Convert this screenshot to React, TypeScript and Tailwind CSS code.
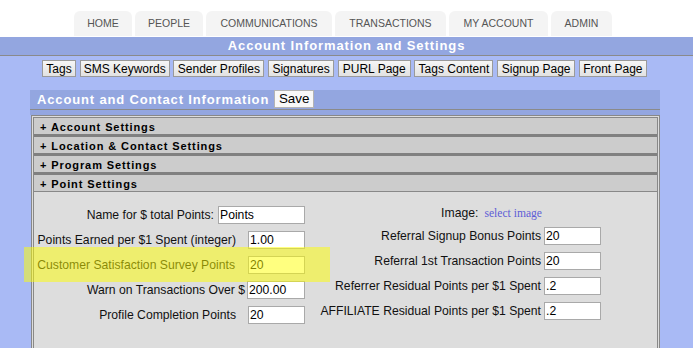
import React from 'react';

const tabs = [
  { label: 'HOME', w: 'w-[58px]' },
  { label: 'PEOPLE', w: 'w-[68px]' },
  { label: 'COMMUNICATIONS', w: 'w-[126px]' },
  { label: 'TRANSACTIONS', w: 'w-[111px]' },
  { label: 'MY ACCOUNT', w: 'w-[99px]' },
  { label: 'ADMIN', w: 'w-[61px]' },
];

const navButtons = [
  { label: 'Tags', w: 'w-[34px]' },
  { label: 'SMS Keywords', w: 'w-[90px]' },
  { label: 'Sender Profiles', w: 'w-[91px]' },
  { label: 'Signatures', w: 'w-[66px]' },
  { label: 'PURL Page', w: 'w-[73px]' },
  { label: 'Tags Content', w: 'w-[79px]' },
  { label: 'Signup Page', w: 'w-[78px]' },
  { label: 'Front Page', w: 'w-[68px]' },
];

const sections = ['Account Settings', 'Location & Contact Settings', 'Program Settings', 'Point Settings'];

const leftRows = [
  { label: 'Name for $ total Points:', value: 'Points', gap: 'ml-[4px]', width: 'w-[87px]' },
  { label: 'Points Earned per $1 Spent (integer)', value: '1.00', gap: 'ml-[12px]', width: 'w-[57px]' },
  { label: 'Customer Satisfaction Survey Points', value: '20', gap: 'ml-[13px]', width: 'w-[57px]' },
  { label: 'Warn on Transactions Over $', value: '200.00', gap: 'ml-[2px]', width: 'w-[58px]' },
  { label: 'Profile Completion Points', value: '20', gap: 'ml-[12px]', width: 'w-[57px]' },
];

const rightRows = [
  { label: 'Referral Signup Bonus Points', value: '20' },
  { label: 'Referral 1st Transaction Points', value: '20' },
  { label: 'Referrer Residual Points per $1 Spent', value: '.2' },
  { label: 'AFFILIATE Residual Points per $1 Spent', value: '.2' },
];

const Field = ({ value, className = '' }: { value: string; className?: string }) => (
  <div className={`h-[18px] bg-white border border-[#a9a9a9] pl-[1px] flex items-center text-[12.2px] text-black ${className}`}>
    {value}
  </div>
);

export default function App() {
  return (
    <div className="relative w-[693px] h-[348px] overflow-hidden bg-white font-['Liberation_Sans',Arial,sans-serif]">
      {/* top tabs */}
      <div className="flex gap-[3px] pl-[74px] pt-[11px] mb-px">
        {tabs.map((t) => (
          <div key={t.label} className={`${t.w} h-[25px] flex items-center justify-center bg-[#f4f4f4] rounded-t-[6px] text-[10.5px] text-[#555]`}>
            {t.label}
          </div>
        ))}
      </div>

      {/* page title bar */}
      <div className="h-[19px] bg-[#93a6e0] border-b border-[#8a8a8a] flex items-center justify-center text-white font-bold text-[13px] tracking-[0.9px]">
        Account Information and Settings
      </div>

      <div className="bg-[#a9baf5] h-full">
        {/* sub nav buttons */}
        <div className="flex gap-[3.7px] pl-[42px] pt-[4px]">
          {navButtons.map((b) => (
            <div key={b.label} className={`${b.w} h-[17px] flex items-center justify-center whitespace-nowrap border border-[#9a9a9a] bg-gradient-to-b from-[#f6f6f6] to-[#e2e2e2] text-[12px] text-black`}>
              {b.label}
            </div>
          ))}
        </div>

        {/* panel */}
        <div className="ml-[30px] w-[630px] mt-[13px]">
          <div className="h-[19px] bg-[#93a6e0] flex items-start">
            <span className="pl-[7px] pt-[1px] text-white font-bold text-[13px] tracking-[0.85px] leading-[18px]">
              Account and Contact Information
            </span>
            <div className="ml-[5px] w-[40px] h-[18px] flex items-center justify-center bg-[#f8f8f8] border border-[#b4b4b4] text-[13.4px] text-black">
              Save
            </div>
          </div>
          <div className="h-px bg-[#8a8a8a]" />
          <div className="h-[5px] bg-[#93a6e0]" />

          <div className="ml-px w-[629px] border border-[#888] bg-[#ddd] p-px">
            <div className="border border-[#888] h-[240px]">
              {sections.map((s, i) => (
                <div
                  key={s}
                  className={`bg-[#ccc] flex items-center pl-[6px] pt-[2px] text-[11px] font-bold tracking-[0.9px] text-black ${
                    i < sections.length - 1 ? 'h-[19px] border-b-[3px] border-[#808080]' : 'h-[17px] border-b border-[#888]'
                  }`}
                >
                  + {s}
                </div>
              ))}

              <div className="flex text-[12.2px] text-[#111]">
                {/* left column */}
                <div className="w-[271px] flex flex-col gap-[7px] pt-[14px]">
                  {leftRows.map((r) => (
                    <div key={r.label} className="h-[18px] flex items-center justify-end">
                      <span className="whitespace-nowrap">{r.label}</span>
                      <Field value={r.value} className={`${r.gap} ${r.width}`} />
                    </div>
                  ))}
                </div>

                {/* right column */}
                <div className="w-[296px] pt-[14px]">
                  <div className="h-[15px] flex items-center justify-end pr-[59px]">
                    <span>Image:</span>
                    <span className="ml-[6px] font-['Liberation_Serif',serif] text-[11.6px] text-[#5d5dd6]">select image</span>
                  </div>
                  <div className="mt-[6px] flex flex-col gap-[7px]">
                    {rightRows.map((r) => (
                      <div key={r.label} className="h-[18px] flex items-center justify-end">
                        <span className="whitespace-nowrap">{r.label}</span>
                        <Field value={r.value} className="ml-[3px] w-[57px]" />
                      </div>
                    ))}
                  </div>
                </div>
              </div>
            </div>
          </div>
        </div>
      </div>

      {/* yellow highlight marker */}
      <div className="absolute left-[24px] top-[247px] w-[306px] h-[35px] bg-[#ffff0080]" />
    </div>
  );
}
